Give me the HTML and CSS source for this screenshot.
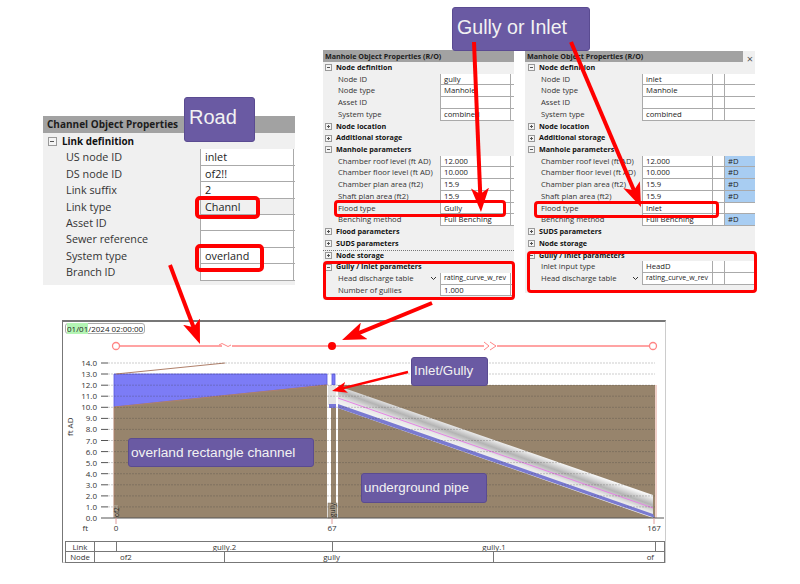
FILE: index.html
```html
<!DOCTYPE html>
<html lang="en">
<head>
  <meta charset="UTF-8">
  <title>Road and pipe long section</title>
  <link rel="stylesheet" href="styles.css">
</head>
<body>

<div class="canvas">

  <!-- channel properties window -->
  <div class="win win-channel">
    <div class="win-title">Channel Object Properties</div>
    <div class="row head"><span class="tog"></span>Link definition</div>
    <div class="row"><span class="lbl">US node ID</span><span class="val">inlet</span><span class="c2"></span></div>
    <div class="row"><span class="lbl">DS node ID</span><span class="val">of2!!</span><span class="c2"></span></div>
    <div class="row"><span class="lbl">Link suffix</span><span class="val">2</span><span class="c2"></span></div>
    <div class="row"><span class="lbl">Link type</span><span class="val grey">Channl</span><span class="c2"></span></div>
    <div class="row"><span class="lbl">Asset ID</span><span class="val"></span><span class="c2"></span></div>
    <div class="row"><span class="lbl">Sewer reference</span><span class="val"></span><span class="c2"></span></div>
    <div class="row"><span class="lbl">System type</span><span class="val">overland</span><span class="c2"></span></div>
    <div class="row"><span class="lbl">Branch ID</span><span class="val"></span><span class="c2"></span></div>
  </div>

  <!-- manhole window, gully -->
  <div class="win win-gully">
    <div class="win-title">Manhole Object Properties (R/O)</div>
    <div class="row head"><span class="tog"></span>Node definition</div>
    <div class="row"><span class="lbl">Node ID</span><span class="val">gully</span><span class="c2"></span></div>
    <div class="row"><span class="lbl">Node type</span><span class="val">Manhole</span><span class="c2"></span></div>
    <div class="row"><span class="lbl">Asset ID</span><span class="val"></span><span class="c2"></span></div>
    <div class="row"><span class="lbl">System type</span><span class="val">combined</span><span class="c2"></span></div>
    <div class="row head"><span class="tog plus"></span>Node location</div>
    <div class="row head"><span class="tog plus"></span>Additional storage</div>
    <div class="row head"><span class="tog"></span>Manhole parameters</div>
    <div class="row"><span class="lbl">Chamber roof level (ft AD)</span><span class="val">12.000</span><span class="c2"></span></div>
    <div class="row"><span class="lbl">Chamber floor level (ft AD)</span><span class="val">10.000</span><span class="c2"></span></div>
    <div class="row"><span class="lbl">Chamber plan area (ft2)</span><span class="val">15.9</span><span class="c2"></span></div>
    <div class="row"><span class="lbl">Shaft plan area (ft2)</span><span class="val">15.9</span><span class="c2"></span></div>
    <div class="row"><span class="lbl">Flood type</span><span class="val">Gully</span><span class="c2"></span></div>
    <div class="row"><span class="lbl">Benching method</span><span class="val">Full Benching</span><span class="c2"></span></div>
    <div class="row head"><span class="tog plus"></span>Flood parameters</div>
    <div class="row head"><span class="tog plus"></span>SUDS parameters</div>
    <div class="row head focus"><span class="tog plus"></span>Node storage</div>
    <div class="row head"><span class="tog"></span>Gully / Inlet parameters</div>
    <div class="row"><span class="lbl">Head discharge table<svg class="chev" viewBox="0 0 7 5"><path d="M1 1l2.5 2.5L6 1"/></svg></span><span class="val long">rating_curve_w_rev</span><span class="c2"></span></div>
    <div class="row"><span class="lbl">Number of gullies</span><span class="val">1.000</span><span class="c2"></span></div>
  </div>

  <!-- manhole window, inlet -->
  <div class="win win-inlet">
    <div class="win-title">Manhole Object Properties (R/O)</div>
    <span class="close">×</span>
    <div class="row head"><span class="tog"></span>Node definition</div>
    <div class="row"><span class="lbl">Node ID</span><span class="val">inlet</span><span class="c2"></span><span class="c3"></span></div>
    <div class="row"><span class="lbl">Node type</span><span class="val">Manhole</span><span class="c2"></span><span class="c3"></span></div>
    <div class="row"><span class="lbl">Asset ID</span><span class="val"></span><span class="c2"></span><span class="c3"></span></div>
    <div class="row"><span class="lbl">System type</span><span class="val">combined</span><span class="c2"></span><span class="c3"></span></div>
    <div class="row head"><span class="tog plus"></span>Node location</div>
    <div class="row head"><span class="tog plus"></span>Additional storage</div>
    <div class="row head"><span class="tog"></span>Manhole parameters</div>
    <div class="row"><span class="lbl">Chamber roof level (ft AD)</span><span class="val">12.000</span><span class="c2"></span><span class="c3 flag">#D</span></div>
    <div class="row"><span class="lbl">Chamber floor level (ft AD)</span><span class="val">10.000</span><span class="c2"></span><span class="c3 flag">#D</span></div>
    <div class="row"><span class="lbl">Chamber plan area (ft2)</span><span class="val">15.9</span><span class="c2"></span><span class="c3 flag">#D</span></div>
    <div class="row"><span class="lbl">Shaft plan area (ft2)</span><span class="val">15.9</span><span class="c2"></span><span class="c3 flag">#D</span></div>
    <div class="row"><span class="lbl">Flood type</span><span class="val">Inlet</span><span class="c2"></span><span class="c3"></span></div>
    <div class="row"><span class="lbl">Benching method</span><span class="val">Full Benching</span><span class="c2"></span><span class="c3 flag">#D</span></div>
    <div class="row head"><span class="tog plus"></span>SUDS parameters</div>
    <div class="row head"><span class="tog plus"></span>Node storage</div>
    <div class="row head"><span class="tog"></span>Gully / Inlet parameters</div>
    <div class="row"><span class="lbl">Inlet input type</span><span class="val">HeadD</span><span class="c2"></span><span class="c3"></span></div>
    <div class="row"><span class="lbl">Head discharge table<svg class="chev" viewBox="0 0 7 5"><path d="M1 1l2.5 2.5L6 1"/></svg></span><span class="val long">rating_curve_w_rev</span><span class="c2"></span><span class="c3"></span></div>
  </div>

  <!-- long section window -->
  <div class="win-chart">
    <div class="stamp"><span class="stamp-on">01/01</span>/2024 02:00:00</div>
    <svg class="plot" viewBox="63 322 602 219">
      <defs>
        <linearGradient id="pipe" gradientUnits="userSpaceOnUse" x1="500" y1="441" x2="492" y2="463">
          <stop offset="0" stop-color="#f6f6f6"/>
          <stop offset="0.35" stop-color="#b4b4b4"/>
          <stop offset="0.65" stop-color="#e8e8e8"/>
          <stop offset="1" stop-color="#fafafa"/>
        </linearGradient>
      </defs>

      <!-- plan strip -->
      <path class="strip" d="M120 346H222M232 346H484M497 346H649"/>
      <path class="strip thin" d="M219 345q3 -3 6 0t6 0M484 342l5 4-5 4M490 342l6 4-6 4"/>
      <circle class="strip-node" cx="116" cy="346" r="3.5"/>
      <circle class="strip-node" cx="653" cy="346" r="3.5"/>
      <circle cx="332" cy="346" r="4" fill="#f00"/>

      <!-- channel -->
      <polygon class="water" points="114,374 327,374 327,385 114,407"/>
      <polygon class="ground" points="114,407 327,385 327,518 114,518"/>
      <path class="crest" d="M116 374L225 363M114 407L327 385M114 407V518"/>

      <!-- gully shaft -->
      <rect class="water" x="332" y="374" width="3" height="11"/>
      <rect x="328" y="385" width="8" height="20" fill="#e4e4e4"/>
      <rect x="329" y="404" width="7" height="4" fill="#7878d8"/>
      <rect class="ground" x="331" y="408" width="5" height="110"/>
      <rect x="328" y="503" width="9" height="15" fill="#aa9c88" stroke="#7d705f" stroke-width="0.5"/>
      <rect x="114" y="505" width="4" height="13" fill="#aa9c88"/>

      <!-- pipe -->
      <polygon class="ground" points="338,385 655,385 655,518 338,518"/>
      <polygon fill="url(#pipe)" points="338,386 653,495 653,518 338,408"/>
      <polygon fill="#7a7ad0" points="338,404 653,514 655,518 338,408"/>
      <path d="M338 398L653 508" stroke="#e584e5" stroke-width="1" fill="none"/>
      <path d="M656 385V518" stroke="#e0a090" stroke-width="1"/>

      <!-- y axis -->
      <path class="grid" d="M108 363H655M108 374H655M108 385.2H655M108 396.2H655M108 407.3H655M108 418.4H655M108 429.4H655M108 440.5H655M108 451.6H655M108 462.6H655M108 473.7H655M108 484.8H655M108 495.9H655M108 506.9H655"/>
      <path class="tick" d="M101 363h7M101 374h7M101 385.2h7M101 396.2h7M101 407.3h7M101 418.4h7M101 429.4h7M101 440.5h7M101 451.6h7M101 462.6h7M101 473.7h7M101 484.8h7M101 495.9h7M101 506.9h7M101 518H664"/>
      <path class="drop" d="M116 518v6M332 518v6M654 518v6"/>
      <g class="ylabels">
        <text x="97" y="366">14.0</text>
        <text x="97" y="377">13.0</text>
        <text x="97" y="388">12.0</text>
        <text x="97" y="399">11.0</text>
        <text x="97" y="410">10.0</text>
        <text x="97" y="421">9.0</text>
        <text x="97" y="432">8.0</text>
        <text x="97" y="443.5">7.0</text>
        <text x="97" y="454.5">6.0</text>
        <text x="97" y="465.5">5.0</text>
        <text x="97" y="476.5">4.0</text>
        <text x="97" y="488">3.0</text>
        <text x="97" y="499">2.0</text>
        <text x="97" y="510">1.0</text>
        <text x="97" y="521">0.0</text>
        <text x="88" y="531">ft</text>
      </g>
      <g class="xlabels">
        <text x="116" y="531">0</text>
        <text x="332" y="531">67</text>
        <text x="654" y="531">167</text>
      </g>
      <text class="rot" transform="translate(73 436) rotate(-90)">ft AD</text>
      <text class="rot small" transform="translate(118.5 517) rotate(-90)">of2</text>
      <text class="rot small" transform="translate(334.5 517) rotate(-90)">gully</text>
    </svg>

    <div class="grid-row link-row">
      <span>Link</span><span></span><span>gully.2</span><span>gully.1</span><span></span>
    </div>
    <div class="grid-row node-row">
      <span>Node</span><span class="to-left">of2</span><span class="to-gully">gully</span><span class="to-right">of</span>
    </div>
  </div>

  <!-- callouts -->
  <div class="note note-road">Road</div>
  <div class="note note-gully">Gully or Inlet</div>
  <div class="note note-inlet">Inlet/Gully</div>
  <div class="note note-channel">overland rectangle channel</div>
  <div class="note note-pipe">underground pipe</div>

  <div class="mark heavy" id="m1"></div>
  <div class="mark heavy" id="m2"></div>
  <div class="mark" id="m3"></div>
  <div class="mark" id="m4"></div>
  <div class="mark" id="m5"></div>
  <div class="mark" id="m6"></div>

  <svg class="arrows" viewBox="0 0 800 584">
    <defs>
      <marker id="head" markerWidth="6" markerHeight="4.5" refX="2.5" refY="2.25" orient="auto">
        <path d="M0 0L6 2.25L0 4.5L1.5 2.25z" fill="#f00"/>
      </marker>
    </defs>
    <line class="arrow" x1="170" y1="265" x2="195" y2="331"/>
    <line class="arrow" x1="474" y1="42" x2="480.4" y2="198"/>
    <line class="arrow" x1="571" y1="42" x2="635.5" y2="194"/>
    <line class="arrow" x1="432" y1="303" x2="355" y2="334.7"/>
    <line class="arrow slim" x1="408" y1="372" x2="340.5" y2="388.9"/>
  </svg>

</div>

</body>
</html>
```

FILE: styles.css
```css
body {
  margin: 0;
  background-color: #ffffff;
}

.canvas {
  position: relative;
  width: 800px;
  height: 584px;
  overflow: hidden;
  font-family: "Open Sans", "Liberation Sans", sans-serif;
  color: #222;
}

/* property windows */
.win {
  position: absolute;
  background-color: #f0f0f0;
}

.win-title {
  background-color: #a2a2a2;
  font-weight: 700;
  color: #1c1c1c;
  white-space: nowrap;
  overflow: hidden;
}

.row {
  display: grid;
  height: var(--row);
  line-height: var(--row);
  white-space: nowrap;
}

.row.head {
  display: flex;
  align-items: center;
  font-weight: 700;
  color: #111;
}

.row.focus {
  border-top: 1px dotted #777;
  height: calc(var(--row) - 1px);
}

.tog {
  box-sizing: border-box;
  flex: none;
  width: var(--tog);
  height: var(--tog);
  margin-right: var(--tog-gap);
  border: 1px solid #999;
  background: linear-gradient(#555, #555) center / 60% 1px no-repeat, #f4f4f4;
}

.tog.plus {
  background:
    linear-gradient(#555, #555) center / 60% 1px no-repeat,
    linear-gradient(#555, #555) center / 1px 60% no-repeat,
    #f4f4f4;
}

.lbl {
  display: flex;
  align-items: center;
  justify-content: space-between;
  padding-left: var(--indent);
  padding-right: 3px;
  color: #333;
  overflow: hidden;
}

.chev {
  width: 7px;
  height: 5px;
  flex: none;
}

.chev path {
  fill: none;
  stroke: #333;
  stroke-width: 1;
}

.val, .c2, .c3 {
  box-sizing: border-box;
  background-color: #fff;
  border-left: 1px solid #aaa;
  border-bottom: 1px solid #aaa;
  overflow: hidden;
  line-height: calc(var(--row) - 1px);
}

.val {
  padding-left: var(--val-pad);
  color: #222;
}

.val.grey {
  background-color: #f0f0f0;
}

.val.long {
  font-size: 7px;
}

.c3.flag {
  background-color: #a8cdf2;
  padding-left: 3px;
}

.win-channel {
  left: 43px;
  top: 116px;
  width: 252px;
  height: 169px;
  font-size: 10.8px;
  --row: 16.4px;
  --tog: 9px;
  --tog-gap: 5px;
  --indent: 23px;
  --val-pad: 4px;
}

.win-channel .win-title {
  height: 17px;
  line-height: 17px;
  padding-left: 4px;
  font-size: 10px;
}

.win-channel .row {
  grid-template-columns: 157px 93px 2px;
}

.win-channel .row.head {
  padding-left: 5px;
  font-size: 9.9px;
}

.win-gully, .win-inlet {
  font-size: 7.7px;
  --row: 11.73px;
  --tog: 7px;
  --tog-gap: 4px;
  --val-pad: 3px;
}

.win-gully .row.head, .win-inlet .row.head, .win-gully .win-title, .win-inlet .win-title {
  font-size: 7.2px;
}

.win-gully {
  left: 323px;
  top: 50px;
  width: 191px;
  height: 250px;
  --indent: 15px;
}

.win-gully .win-title {
  height: 12px;
  line-height: 12px;
  padding-left: 2px;
}

.win-gully .row {
  grid-template-columns: 117px 70px 4px;
}

.win-gully .row.head {
  padding-left: 2px;
}

.win-inlet {
  left: 525px;
  top: 51px;
  width: 230px;
  height: 242px;
  --indent: 16px;
}

.win-inlet .win-title {
  height: 11px;
  line-height: 11px;
  padding-left: 2px;
  margin-right: 12px;
}

.win-inlet .row {
  grid-template-columns: 117px 70px 12px 31px;
}

.win-inlet .row.head {
  padding-left: 3px;
}

.close {
  position: absolute;
  right: 2px;
  top: 1px;
  font-size: 11px;
  line-height: 13px;
  color: #555;
}

/* long section */
.win-chart {
  position: absolute;
  left: 62px;
  top: 320px;
  width: 604px;
  height: 243px;
  box-sizing: border-box;
  border-top: 2px solid #777;
  border-left: 1px solid #777;
  border-right: 1px solid #ccc;
  border-bottom: 1px solid #ccc;
  font-size: 7.8px;
}

.stamp {
  position: absolute;
  left: 2px;
  top: 1px;
  height: 9px;
  line-height: 9px;
  padding: 0 1px;
  border: 1px solid #aaa;
  border-radius: 3px;
  white-space: nowrap;
  color: #222;
  font-size: 8px;
}

.stamp-on {
  background-color: #b4f5b4;
}

.plot {
  display: block;
  width: 602px;
  height: 219px;
  font-family: "Open Sans", "Liberation Sans", sans-serif;
  font-size: 8px;
  fill: #333;
}

.strip {
  fill: none;
  stroke: #ff8585;
  stroke-width: 1.5;
}

.strip.thin {
  stroke-width: 1;
}

.strip-node {
  fill: #fff;
  stroke: #ff8585;
  stroke-width: 1.3;
}

.water {
  fill: #7c7cf6;
  stroke: #5858e0;
  stroke-width: 0.8;
}

.ground {
  fill: #97846c;
}

.crest {
  fill: none;
  stroke: #b0806a;
  stroke-width: 1;
}

.grid {
  fill: none;
  stroke: rgba(60, 60, 60, 0.25);
  stroke-width: 1;
  stroke-dasharray: 2 1;
}

.tick {
  fill: none;
  stroke: #555;
  stroke-width: 1;
}

.drop {
  fill: none;
  stroke: #e09a9a;
  stroke-width: 1;
}

.ylabels text {
  text-anchor: end;
}

.xlabels text {
  text-anchor: middle;
}

.rot.small {
  font-size: 6.5px;
  fill: #222;
}

.grid-row {
  display: grid;
  box-sizing: border-box;
  width: 600px;
  height: 11px;
  margin-left: 2px;
  line-height: 10px;
  border: 1px solid #777;
  color: #333;
}

.node-row {
  border-top: none;
}

.grid-row span {
  border-right: 1px solid #777;
  text-align: center;
  overflow: hidden;
}

.grid-row span:last-child {
  border-right: none;
}

.link-row {
  grid-template-columns: 29px 22px 216px 323px 1fr;
}

.node-row {
  grid-template-columns: 29px 130px 269px 1fr;
}

.grid-row .to-left {
  text-align: left;
  padding-left: 25px;
}

.grid-row .to-gully {
  text-align: right;
  padding-right: 153px;
}

.grid-row .to-right {
  text-align: right;
  padding-right: 10px;
}

/* callouts */
.note {
  position: absolute;
  box-sizing: border-box;
  background-color: #6a5aa3;
  border: 1px solid #5a4b91;
  border-radius: 3px;
  font-family: "Liberation Sans", Arial, sans-serif;
  color: #f2f2f2;
  white-space: nowrap;
}

.note-road {
  left: 184px;
  top: 97px;
  width: 71px;
  height: 45px;
  padding: 8px 4px;
  font-size: 20px;
}

.note-gully {
  left: 452px;
  top: 7px;
  width: 138px;
  height: 44px;
  padding: 8px 4px;
  font-size: 19.6px;
}

.note-inlet {
  left: 411px;
  top: 357px;
  width: 77px;
  height: 29px;
  padding: 5px 2px;
  font-size: 13.3px;
}

.note-channel {
  left: 128px;
  top: 438px;
  width: 186px;
  height: 29px;
  padding: 6px 2px;
  font-size: 13.7px;
}

.note-pipe {
  left: 361px;
  top: 473px;
  width: 126px;
  height: 30px;
  padding: 6px 2px;
  font-size: 13.4px;
}

/* red outlines */
.mark {
  position: absolute;
  box-sizing: border-box;
  border: 3px solid #f00;
  border-radius: 4px;
}

.mark.heavy {
  border-width: 4px;
  border-radius: 5px;
}

#m1 { left: 195px; top: 196px; width: 65px; height: 23px; }
#m2 { left: 195px; top: 244px; width: 69px; height: 28px; }
#m3 { left: 334px; top: 200px; width: 172px; height: 17px; }
#m4 { left: 323px; top: 261px; width: 192px; height: 39px; }
#m5 { left: 534px; top: 201px; width: 185px; height: 17px; }
#m6 { left: 527px; top: 251px; width: 230px; height: 42px; }

.arrows {
  position: absolute;
  left: 0;
  top: 0;
  width: 800px;
  height: 584px;
  pointer-events: none;
}

.arrow {
  stroke: #f00;
  stroke-width: 4;
  marker-end: url(#head);
}

.arrow.slim {
  stroke-width: 2.5;
}
```
